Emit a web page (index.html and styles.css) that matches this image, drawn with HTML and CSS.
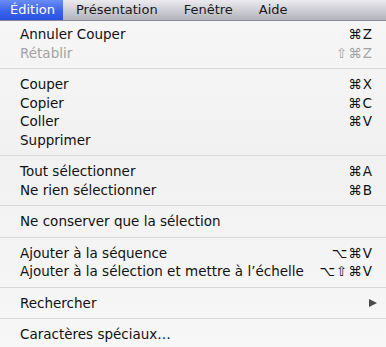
FILE: index.html
```html
<!DOCTYPE html>
<html lang="fr">
<head>
    <meta charset="UTF-8">
    <title>Menu Édition</title>
    <link rel="stylesheet" href="styles.css">
</head>
<body>
    <div class="menubar">
        <span class="menubar-item active">Édition</span>
        <span class="menubar-item">Présentation</span>
        <span class="menubar-item">Fenêtre</span>
        <span class="menubar-item">Aide</span>
    </div>

    <div class="menu">
        <div class="menu-item"><span>Annuler Couper</span><span class="shortcut">⌘Z</span></div>
        <div class="menu-item disabled"><span>Rétablir</span><span class="shortcut">⇧⌘Z</span></div>
        <div class="separator"></div>
        <div class="menu-item"><span>Couper</span><span class="shortcut">⌘X</span></div>
        <div class="menu-item"><span>Copier</span><span class="shortcut">⌘C</span></div>
        <div class="menu-item"><span>Coller</span><span class="shortcut">⌘V</span></div>
        <div class="menu-item"><span>Supprimer</span></div>
        <div class="separator"></div>
        <div class="menu-item"><span>Tout sélectionner</span><span class="shortcut">⌘A</span></div>
        <div class="menu-item"><span>Ne rien sélectionner</span><span class="shortcut">⌘B</span></div>
        <div class="separator"></div>
        <div class="menu-item"><span>Ne conserver que la sélection</span></div>
        <div class="separator"></div>
        <div class="menu-item"><span>Ajouter à la séquence</span><span class="shortcut">⌥⌘V</span></div>
        <div class="menu-item"><span>Ajouter à la sélection et mettre à l’échelle</span><span class="shortcut">⌥⇧⌘V</span></div>
        <div class="separator"></div>
        <div class="menu-item"><span>Rechercher</span><span class="submenu-arrow"></span></div>
        <div class="separator"></div>
        <div class="menu-item"><span>Caractères spéciaux…</span></div>
    </div>
</body>
</html>
```

FILE: styles.css
```css
/* Base styles */
* {
    margin: 0;
    padding: 0;
    box-sizing: border-box;
}

body {
    font-family: 'DejaVu Sans', 'Liberation Sans', sans-serif;
    width: 386px;
    height: 347px;
    overflow: hidden;
    background-color: #f4f4f4;
    color: #111;
}

/* Menu bar */
.menubar {
    display: flex;
    height: 21px;
    background: linear-gradient(to bottom, #ebebef, #c9c9d0 60%, #b3b3bb);
    border-bottom: 1px solid #8a8a92;
    font-size: 13px;
    line-height: 20px;
}

.menubar-item {
    padding: 0 13px 0 13px;
    color: #1a1a1a;
}

.menubar-item.active {
    padding: 0 10px 0 10px;
    width: 63px;
    color: #fff;
    background: linear-gradient(to bottom, #6b8cf5, #3c63ec 55%, #2b50e2);
}

/* Menu */
.menu {
    display: flex;
    flex-direction: column;
    padding-top: 4px;
    background: linear-gradient(to bottom, #f6f6f6, #f1f1f1 40%, #f7f7f7);
    height: 326px;
}

.menu-item {
    display: flex;
    justify-content: space-between;
    align-items: center;
    height: 18.5px;
    padding: 0 13px 0 20px;
    font-size: 13.5px;
}

.menu-item.disabled {
    color: #a3a3a3;
}

.shortcut {
    letter-spacing: 1px;
}

.separator {
    height: 1px;
    margin: 6px 0;
    background-color: #d9d9d9;
}

.submenu-arrow {
    width: 0;
    height: 0;
    margin-right: -4px;
    border-top: 4.5px solid transparent;
    border-bottom: 4.5px solid transparent;
    border-left: 8px solid #4a4a4a;
}
```
